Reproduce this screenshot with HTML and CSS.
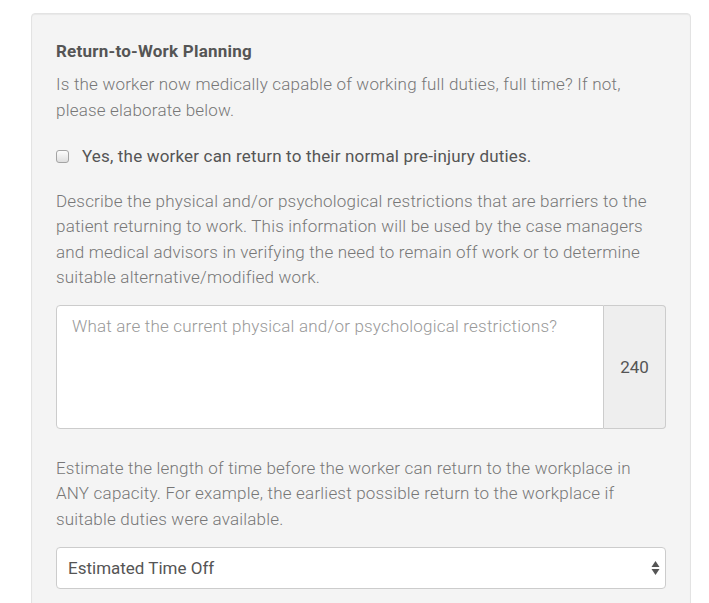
FILE: index.html
```html
<!DOCTYPE html>
<html lang="en">
<head>
<meta charset="utf-8">
<title>Return-to-Work Planning</title>
<link rel="stylesheet" href="styles.css">
</head>
<body>
<div class="page">
  <section class="well">
    <h4 class="heading">Return-to-Work Planning</h4>
    <p class="help help-first">Is the worker now medically capable of working full duties, full time? If not, please elaborate below.</p>
    <label class="check">
      <input type="checkbox" class="check-input">
      <span class="check-box"></span>
      <span class="check-label">Yes, the worker can return to their normal pre-injury duties.</span>
    </label>
    <p class="help help-desc">Describe the physical and/or psychological restrictions that are barriers to the patient returning to work. This information will be used by the case managers and medical advisors in verifying the need to remain off work or to determine suitable alternative/modified work.</p>
    <div class="input-group">
      <textarea class="textarea" placeholder="What are the current physical and/or psychological restrictions?"></textarea>
      <span class="addon">240</span>
    </div>
    <p class="help help-est">Estimate the length of time before the worker can return to the workplace in ANY capacity. For example, the earliest possible return to the workplace if suitable duties were available.</p>
    <div class="select-wrap">
      <select class="select">
        <option>Estimated Time Off</option>
      </select>
      <svg class="select-arrows" width="9" height="16" viewBox="0 0 9 16" aria-hidden="true">
        <path d="M4.5 1 L8.5 7 L0.5 7 Z" fill="#555"/>
        <path d="M4.5 15 L8.5 9 L0.5 9 Z" fill="#555"/>
      </svg>
    </div>
  </section>
</div>
</body>
</html>
```

FILE: styles.css
```css
* { box-sizing: border-box; }
html, body { margin: 0; padding: 0; background: #fff; }
body {
  font-family: Roboto, "Liberation Sans", Arial, sans-serif;
  font-size: 17px;
  color: #555;
  overflow: hidden;
}
.page {
  padding: 13px 0 0 31px;
}
.well {
  width: 660px;
  background: #f4f4f4;
  border: 1px solid #e3e3e3;
  border-radius: 4px;
  box-shadow: inset 0 1px 1px rgba(0,0,0,0.05);
  padding: 25px 24px 40px;
}
.heading {
  margin: 0;
  font-size: 17px;
  font-weight: 700;
  letter-spacing: 0.23px;
  line-height: 24px;
  color: #555;
}
.help {
  margin: 0;
  font-weight: 300;
  font-size: 17px;
  letter-spacing: 0.2px;
  line-height: 25.5px;
  color: #777;
}
.help-first { margin-top: 9px; }
.check {
  display: flex;
  align-items: center;
  margin-top: 21px;
  line-height: 25.5px;
  cursor: pointer;
}
.check-input {
  position: absolute;
  opacity: 0;
  width: 0;
  height: 0;
}
.check-box {
  width: 13px;
  height: 13px;
  border: 1px solid #a4a4a4;
  border-radius: 3px;
  background: linear-gradient(#fdfdfd, #dedede);
  flex: none;
  margin-right: 13px;
}
.check-label {
  font-size: 17px;
  font-weight: 400;
  letter-spacing: 0.17px;
  color: #555;
}
.help-desc { margin-top: 19px; }
.input-group {
  display: flex;
  margin-top: 14px;
  height: 124px;
}
.textarea {
  flex: 1;
  height: 100%;
  resize: none;
  border: 1px solid #ccc;
  border-radius: 4px 0 0 4px;
  background: #fff;
  padding: 8px 15px;
  font-family: inherit;
  font-size: 17px;
  font-weight: 300;
  letter-spacing: 0.2px;
  line-height: 25.5px;
  color: #555;
  outline: none;
}
.textarea::placeholder { color: #999; opacity: 1; }
.addon {
  width: 62px;
  display: flex;
  align-items: center;
  justify-content: center;
  background: #eee;
  border: 1px solid #ccc;
  border-left: 0;
  border-radius: 0 4px 4px 0;
  color: #555;
  font-size: 17px;
}
.help-est { margin-top: 27px; }
.select-wrap {
  position: relative;
  margin-top: 15px;
}
.select {
  display: block;
  width: 100%;
  height: 42px;
  appearance: none;
  -webkit-appearance: none;
  border: 1px solid #ccc;
  border-radius: 4px;
  background: #fff;
  padding: 0 30px 0 11px;
  font-family: inherit;
  font-size: 17px;
  font-weight: 400;
  color: #555;
  outline: none;
}
.select-arrows {
  position: absolute;
  right: 6px;
  top: 13px;
  pointer-events: none;
}
```
